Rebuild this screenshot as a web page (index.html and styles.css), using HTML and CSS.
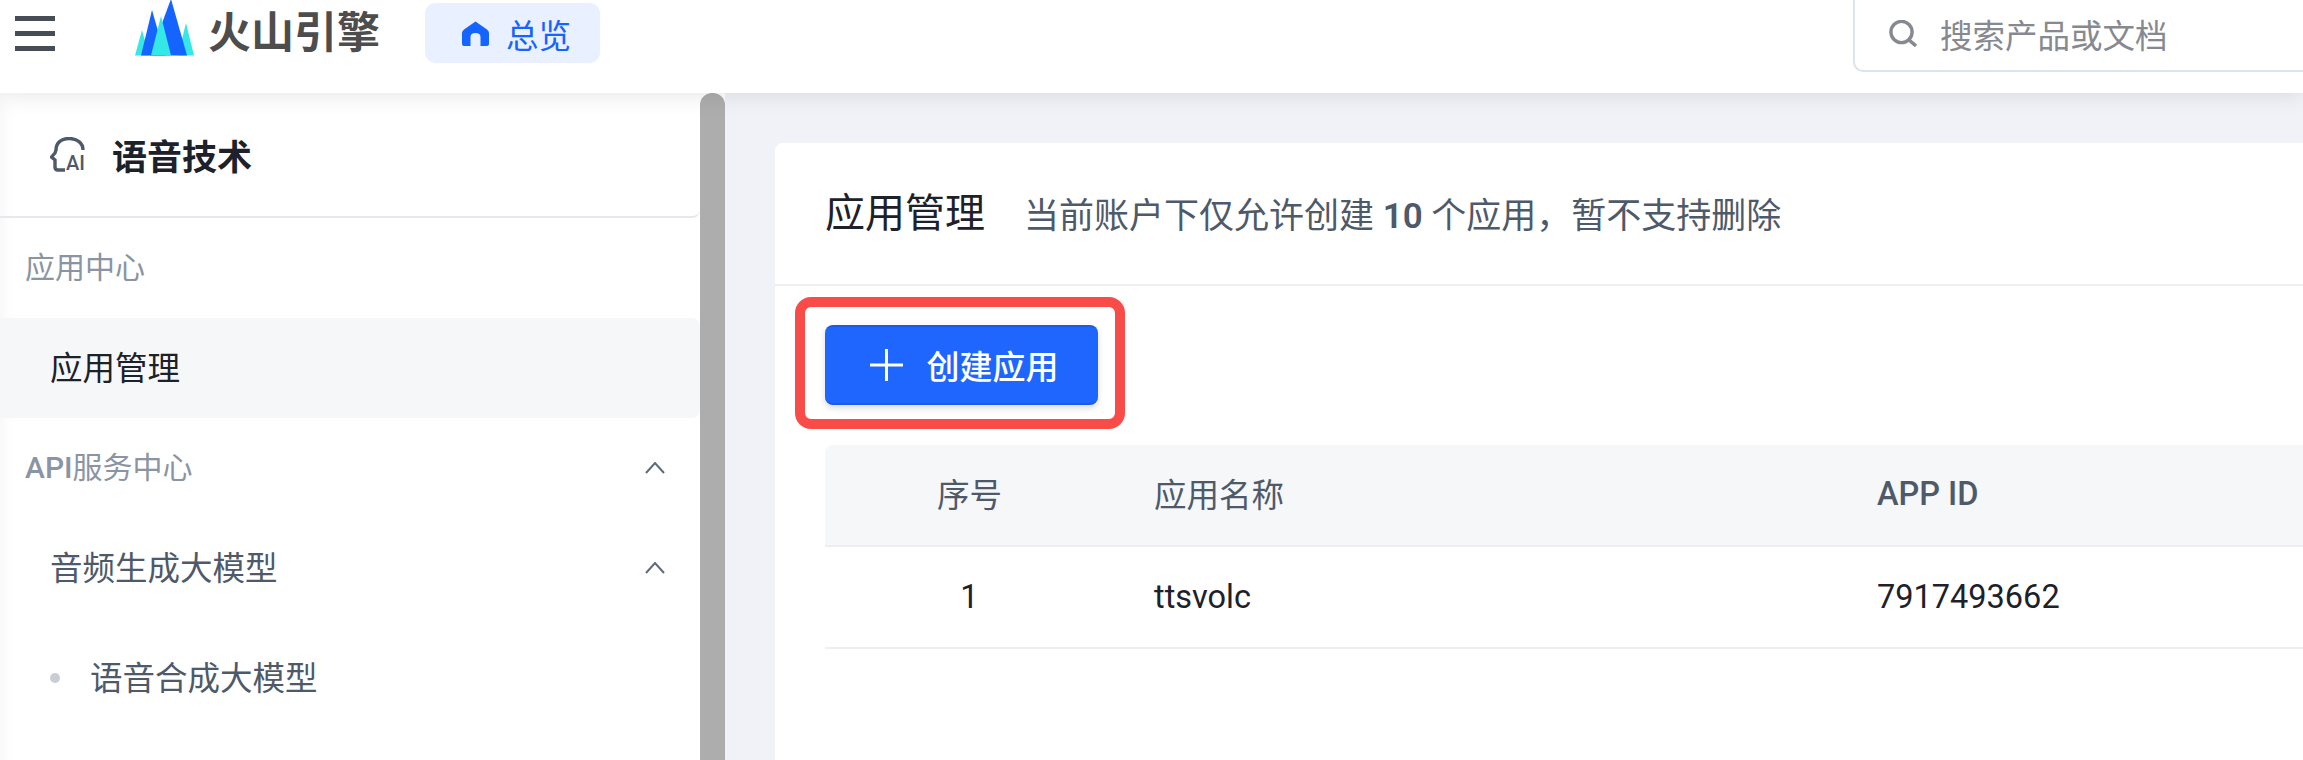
FILE: index.html
```html
<!DOCTYPE html>
<html lang="zh-CN">

<head>
  <meta charset="UTF-8">
  <title>语音技术 - 应用管理</title>
  <link rel="stylesheet" href="styles.css">
</head>

<body>
  <header class="topbar">
    <div class="hamburger"><span></span><span></span><span></span></div>
    <svg class="logo" width="60" height="56" viewBox="0 0 60 56">
      <polygon points="7,30 0,55.5 14,55.5" fill="#33e8e6" />
      <polygon points="51,23 43,55.5 59,55.5" fill="#33e8e6" />
      <polygon points="17,10 6,55.5 30,55.5" fill="#1664ff" />
      <polygon points="36,-1 15,55.5 52,55.5" fill="#1664ff" />
      <polygon points="26,16 16,55.5 36,55.5" fill="#33e8e6" />
    </svg>
    <div class="brand">火山引擎</div>
    <a class="overview-tab">
      <svg width="27" height="25" viewBox="0 0 27 25">
        <path fill="#1664ff" d="M13.5 0.5L25 8.5Q27 10 27 12V23Q27 25 25 25H18.5V16Q18.5 12 13.5 12Q8.5 12 8.5 16V25H2Q0 25 0 23V12Q0 10 2 8.5Z" />
      </svg>
      <span>总览</span>
    </a>
    <div class="search">
      <svg width="28" height="27" viewBox="0 0 28 27" fill="none" stroke="#86898f" stroke-width="3.4">
        <circle cx="12.5" cy="12" r="10.6" />
        <path d="M20 20L27 26" />
      </svg>
      <span>搜索产品或文档</span>
    </div>
  </header>

  <div class="layout">
    <aside class="sidebar">
      <div class="product">
        <div class="product-icon">
          <svg width="35" height="35" viewBox="0 0 35 35">
            <path fill="none" stroke="#4e5969" stroke-width="3.4" d="M33 13C33 6 27 1.5 19 1.5C11 1.5 6 6 6 13L5 16L1.5 20L5 23V30Q5 33 8 33H15" />
          </svg>
          <span class="ai-text">AI</span>
        </div>
        <span>语音技术</span>
      </div>
      <div class="menu-label">应用中心</div>
      <div class="menu-item active">应用管理</div>
      <div class="menu-label"><span><span class="latin">API</span>服务中心</span>
        <svg width="20" height="12" viewBox="0 0 20 12" fill="none" stroke="#5f6b7a" stroke-width="2">
          <polyline points="1,11 10,1 19,11" />
        </svg>
      </div>
      <div class="menu-item"><span>音频生成大模型</span>
        <svg width="20" height="12" viewBox="0 0 20 12" fill="none" stroke="#5f6b7a" stroke-width="2">
          <polyline points="1,11 10,1 19,11" />
        </svg>
      </div>
      <div class="menu-sub"><i class="dot"></i><span>语音合成大模型</span></div>
    </aside>
    <div class="scrollbar"></div>

    <main class="content">
      <section class="card">
        <div class="card-head">
          <h1>应用管理</h1>
          <p>当前账户下仅允许创建 <b>10</b> 个应用，暂不支持删除</p>
        </div>
        <div class="toolbar">
          <button class="create-button">
            <svg width="33" height="32" viewBox="0 0 33 32" stroke="#fff" stroke-width="3">
              <path d="M0 16H33M16.5 0V32" />
            </svg>
            创建应用
          </button>
          <div class="annotation"></div>
        </div>
        <table class="app-table">
          <thead>
            <tr>
              <th class="col-index">序号</th>
              <th class="col-name">应用名称</th>
              <th class="col-id"><span class="latin">APP ID</span></th>
              <th></th>
            </tr>
          </thead>
          <tbody>
            <tr>
              <td class="col-index">1</td>
              <td>ttsvolc</td>
              <td>7917493662</td>
              <td></td>
            </tr>
          </tbody>
        </table>
      </section>
    </main>
  </div>
</body>

</html>
```

FILE: styles.css
```css
* {
  box-sizing: border-box;
}

html,
body {
  height: 100%;
}

body {
  margin: 0;
  overflow: hidden;
  background: #fff;
  color: #1d2129;
  font-family: Roboto, "Noto Sans CJK SC", sans-serif;
  font-size: 32.5px;
}

.latin {
  font-weight: 500;
}

.topbar {
  position: relative;
  z-index: 2;
  display: flex;
  align-items: flex-start;
  height: 93px;
  padding-left: 15px;
  background: #fff;
  box-shadow: 0 2px 22px rgba(0, 0, 0, 0.1);
}

.topbar > * {
  flex: none;
}

.hamburger {
  display: flex;
  flex-direction: column;
  gap: 10px;
  width: 40px;
  margin-top: 16px;
}

.hamburger span {
  height: 5px;
  background: #474c57;
}

.logo {
  margin-left: 80px;
}

.brand {
  width: 172px;
  margin-left: 13px;
  margin-top: 3px;
  color: #4d4d4d;
  font-size: 43px;
  font-weight: 700;
  line-height: 61px;
}

.overview-tab {
  display: flex;
  align-items: center;
  gap: 17px;
  width: 175px;
  height: 60px;
  margin: 3px 0 0 45px;
  padding-left: 37px;
  border-radius: 10px;
  background: #e9f0ff;
  color: #1664ff;
}

.search {
  display: flex;
  align-items: center;
  gap: 23px;
  width: 480px;
  height: 72px;
  margin-left: 1253px;
  padding: 0 0 4px 34px;
  border: 2px solid #dde3ea;
  border-top: 0;
  border-radius: 0 0 10px 10px;
  color: #86898f;
}

.layout {
  display: flex;
  height: calc(100% - 93px);
}

.sidebar {
  flex: none;
  width: 700px;
  background: #fff;
  box-shadow: inset 14px 0 18px -14px rgba(0, 0, 0, 0.05);
}

.product {
  display: flex;
  align-items: center;
  gap: 27px;
  height: 125px;
  padding-left: 50px;
  border-bottom: 2px solid #e5e8ec;
  border-bottom-right-radius: 8px;
  font-size: 35px;
  font-weight: 700;
}

.product-icon {
  position: relative;
  display: flex;
  flex: none;
  width: 35px;
  height: 35px;
}

.ai-text {
  position: absolute;
  right: 0;
  bottom: 0;
  color: #4e5969;
  font-size: 20px;
  font-weight: 500;
  line-height: 18px;
}

.menu-label,
.menu-item,
.menu-sub {
  display: flex;
  align-items: center;
  justify-content: space-between;
  height: 100px;
  padding: 0 35px 6px 25px;
}

.menu-label svg,
.menu-item svg {
  margin-top: 5px;
}

.menu-label {
  color: #8a94a3;
  font-size: 30px;
}

.menu-item {
  padding-left: 50px;
  color: #4e5969;
}

.menu-item.active {
  border-radius: 0 8px 8px 0;
  background: #f6f7f9;
  color: #1d2129;
}

.menu-sub {
  justify-content: flex-start;
  gap: 30px;
  margin-top: 10px;
  padding-left: 50px;
  color: #4e5969;
}

.dot {
  width: 10px;
  height: 10px;
  margin-top: 5px;
  border-radius: 50%;
  background: #c9cdd4;
}

.scrollbar {
  flex: none;
  width: 25px;
  border-radius: 12px 12px 0 0;
  background: #adadad;
}

.content {
  flex: 1;
  padding: 50px 0 0 50px;
  background: #f0f2f7;
}

.card {
  height: 100%;
  border-radius: 8px 0 0 0;
  background: #fff;
}

.card-head {
  display: flex;
  align-items: center;
  gap: 39px;
  height: 143px;
  padding: 0 0 2px 50px;
  border-bottom: 2px solid #eef0f4;
}

.card-head h1 {
  margin: 0 0 5px;
  font-size: 40px;
  font-weight: 400;
}

.card-head p {
  margin: 0;
  color: #4e5969;
  font-size: 35px;
}

.card-head b {
  font-weight: 600;
}

.toolbar {
  position: relative;
  width: 273px;
  margin: 39px 0 40px 50px;
}

.create-button {
  display: flex;
  align-items: center;
  justify-content: center;
  gap: 24px;
  width: 273px;
  height: 80px;
  padding: 0 0 0 5px;
  border: 0;
  border-top: 2px solid #1a5ce6;
  border-bottom: 2px solid #1a5ce6;
  border-radius: 8px;
  background: #1f66ff;
  box-shadow: 0 3px 6px rgba(0, 0, 0, 0.15);
  color: #fff;
  font-family: inherit;
  font-size: 33px;
  font-weight: 500;
}

.annotation {
  position: absolute;
  top: -28px;
  left: -30px;
  width: 330px;
  height: 132px;
  border: 10px solid #f94c48;
  border-radius: 16px;
}

.app-table {
  width: 1478px;
  margin-left: 50px;
  border-spacing: 0;
  table-layout: fixed;
}

.app-table th,
.app-table td {
  height: 102px;
  padding: 0 0 0 40px;
  border-bottom: 2px solid #eceef2;
  text-align: left;
  font-weight: 400;
}

.app-table th {
  padding-bottom: 5px;
  background: #f6f7f9;
  color: #4e5969;
}

.app-table th:first-child {
  border-top-left-radius: 8px;
}

.app-table .col-index {
  width: 289px;
  padding-left: 0;
  text-align: center;
}

.app-table .col-name {
  width: 723px;
}

.app-table .col-id {
  width: 400px;
  padding-bottom: 3px;
}
```
